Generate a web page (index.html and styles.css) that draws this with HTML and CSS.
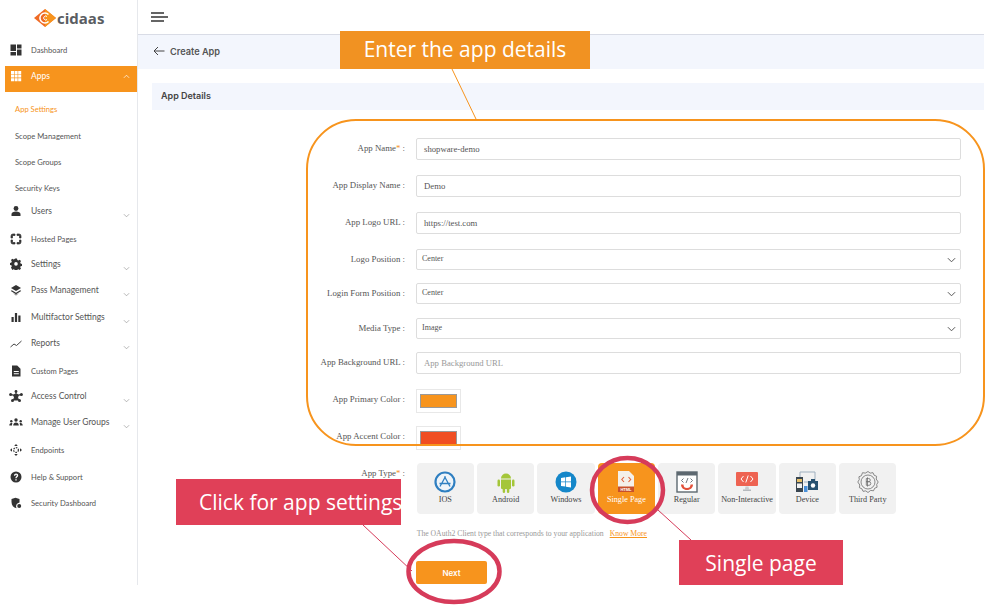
FILE: index.html
```html
<!DOCTYPE html>
<html>
<head>
    <title>Create App</title>
    <meta charset="utf-8" />
    <link rel="stylesheet" href="styles.css">
</head>
<body>
    <div class="page">
        <aside class="sidebar">
            <div class="logo">
                <svg class="logo-mark" viewBox="0 0 22 18" width="22" height="18">
                    <path d="M11 0 L22 9 L11 18 L0 9 Z" fill="#ef6a24"/>
                    <path d="M11 0 L22 9 L11 18 Z" fill="#f7941d"/>
                    <path d="M14.5 5.5 A5 5 0 1 0 14.5 12.500" fill="none" stroke="#fff" stroke-width="1.6"/>
                    <path d="M13 7.500 A2 2 0 1 0 13 10.500" fill="none" stroke="#fff" stroke-width="1"/>
                </svg>
                <span class="logo-text">cidaas</span>
            </div>
            <nav class="menu">
                <a class="item small">
                    <svg class="ico" viewBox="0 0 12 12"><path d="M.5.500h5.500v6.500H.5zM7 .5h4.500v4H7zM7 5.500h4.500v6H7zM.5 8H6v3.500H.5z"/></svg>
                    Dashboard
                </a>
                <a class="item active">
                    <svg class="ico" viewBox="0 0 12 12"><path d="M1 1h3v3H1zM4.600 1h3v3h-3zM8.200 1h3v3h-3zM1 4.600h3v3H1zM4.600 4.600h3v3h-3zM8.200 4.600h3v3h-3zM1 8.200h3v3H1zM4.600 8.200h3v3h-3zM8.200 8.200h3v3h-3z"/></svg>
                    Apps
                    <svg class="chev" viewBox="0 0 8 5"><path d="M1 4l3-3 3 3"/></svg>
                </a>
                <div class="subs">
                    <a class="sub current">App Settings</a>
                    <a class="sub">Scope Management</a>
                    <a class="sub">Scope Groups</a>
                    <a class="sub">Security Keys</a>
                </div>
                <a class="item">
                    <svg class="ico" viewBox="0 0 12 12"><circle cx="6" cy="3.500" r="2.400"/><path d="M1.500 11V9c0-1.600 2-2.600 4.500-2.600s4.500 1 4.500 2.600v2z"/></svg>
                    Users
                    <svg class="chev" viewBox="0 0 8 5"><path d="M1 1l3 3 3-3"/></svg>
                </a>
                <a class="item small">
                    <svg class="ico" viewBox="0 0 12 12"><path stroke="#333" stroke-width=".7" d="M1 3a2 2 0 0 1 2-2h2v1.500H3a.5.500 0 0 0-.5.500v2H1zM7 1h2a2 2 0 0 1 2 2v2H9.500V3a.5.500 0 0 0-.5-.5H7zM1 7h1.500v2a.5.500 0 0 0 .5.500h2V11H3a2 2 0 0 1-2-2zM9.500 7H11v2a2 2 0 0 1-2 2H7V9.500h2a.5.500 0 0 0 .5-.5z"/></svg>
                    Hosted Pages
                </a>
                <a class="item">
                    <svg class="ico" viewBox="0 0 12 12"><path fill-rule="evenodd" d="M5 .5h2l.3 1.500 1.100.5 1.300-.8 1.300 1.400-.8 1.300.4 1.100 1.400.4v2l-1.400.3-.4 1.100.8 1.300-1.300 1.400-1.300-.8-1.100.5-.3 1.300H5l-.3-1.300-1.100-.5-1.300.8L1 9.600l.8-1.300-.4-1.100L0 6.900v-2l1.400-.4.4-1.100L1 2.100 2.300.7l1.300.8 1.100-.5zM6 4.100a1.800 1.800 0 1 0 0 3.600 1.800 1.800 0 0 0 0-3.600z"/></svg>
                    Settings
                    <svg class="chev" viewBox="0 0 8 5"><path d="M1 1l3 3 3-3"/></svg>
                </a>
                <a class="item">
                    <svg class="ico" viewBox="0 0 12 12"><path d="M6 1l5 3-5 3-5-3z"/><path d="M1.800 6.200L6 8.700l4.200-2.500 1 .7L6 10.200.8 6.900z"/><path d="M3 9l3 1.800L9 9l-3 2.400z"/></svg>
                    Pass Management
                    <svg class="chev" viewBox="0 0 8 5"><path d="M1 1l3 3 3-3"/></svg>
                </a>
                <a class="item">
                    <svg class="ico" viewBox="0 0 12 12"><path d="M1.500 6h2.200v5H1.500zM4.900 2h2.200v9H4.900zM8.300 4.500h2.200V11H8.300z"/></svg>
                    Multifactor Settings
                    <svg class="chev" viewBox="0 0 8 5"><path d="M1 1l3 3 3-3"/></svg>
                </a>
                <a class="item">
                    <svg class="ico line" viewBox="0 0 12 12"><path d="M.5 10L4 7l2.500 1.500L11.500 4"/></svg>
                    Reports
                    <svg class="chev" viewBox="0 0 8 5"><path d="M1 1l3 3 3-3"/></svg>
                </a>
                <a class="item small">
                    <svg class="ico" viewBox="0 0 12 12"><path fill-rule="evenodd" d="M2 .5h5.200L10.500 3.800V11.500H2zM3.800 6v1h5V6zM3.800 8.200v1h5v-1z"/></svg>
                    Custom Pages
                </a>
                <a class="item">
                    <svg class="ico wide" viewBox="0 0 14 12"><path d="M1.500 4.500L7 6l5.500-1.500M7 1.500V6M3.500 10.500L7 6l3.500 4.500" stroke="#333" stroke-width="1"/><circle cx="7" cy="6" r="2.500"/><circle cx="1.600" cy="4.500" r="1.500"/><circle cx="12.400" cy="4.500" r="1.500"/><circle cx="7" cy="1.500" r="1.400"/><circle cx="3.500" cy="10.400" r="1.500"/><circle cx="10.500" cy="10.400" r="1.500"/></svg>
                    Access Control
                    <svg class="chev" viewBox="0 0 8 5"><path d="M1 1l3 3 3-3"/></svg>
                </a>
                <a class="item">
                    <svg class="ico wide" viewBox="0 0 14 12"><circle cx="7" cy="4" r="1.700"/><path d="M4.200 9.500c0-2 1.200-3 2.800-3s2.800 1 2.800 3z"/><circle cx="2.300" cy="5.200" r="1.200"/><path d="M.3 9.500c0-1.600.8-2.500 2-2.500.5 0 .8.100 1.100.3-.3.600-.4 1.300-.4 2.200z"/><circle cx="11.700" cy="5.200" r="1.200"/><path d="M13.700 9.500c0-1.600-.8-2.500-2-2.500-.5 0-.8.100-1.100.3.300.6.400 1.300.4 2.200z"/></svg>
                    Manage User Groups
                    <svg class="chev" viewBox="0 0 8 5"><path d="M1 1l3 3 3-3"/></svg>
                </a>
                <a class="item small">
                    <svg class="ico" viewBox="0 0 12 12"><path d="M6 0l1.800 2H4.200zM6 12l1.800-2H4.200zM0 6l2-1.800v3.600zM12 6l-2-1.800v3.600z"/><circle cx="6" cy="6" r="2.400" fill="none" stroke="#333" stroke-width="1.200" stroke-dasharray="1.500 1"/></svg>
                    Endpoints
                </a>
                <a class="item small">
                    <svg class="ico" viewBox="0 0 12 12"><path fill-rule="evenodd" d="M6 .5a5.500 5.500 0 1 1 0 11 5.500 5.500 0 0 1 0-11zM5.300 8.200v1.400h1.400V8.200zM4 4.700h1.300c0-.6.300-.9.800-.9s.7.300.7.700c0 .9-1.500 1-1.500 2.800h1.300c0-1.200 1.600-1.400 1.600-2.900 0-1.200-.9-1.900-2.100-1.900C4.900 2.500 4 3.400 4 4.700z"/></svg>
                    Help &amp; Support
                </a>
                <a class="item small">
                    <svg class="ico" viewBox="0 0 12 12"><path d="M5.500.8L9.500 2v3.500a4 4 0 0 0-3 5.800C3.500 10.500 1.500 8.500 1.500 5V2z"/><circle cx="9.200" cy="9" r="2"/></svg>
                    Security Dashboard
                </a>
            </nav>
        </aside>

        <main class="content">
            <header class="topbar">
                <svg class="burger" viewBox="0 0 17 10" width="17" height="10"><path d="M0 1h13M0 5h17M0 9h13"/></svg>
            </header>
            <div class="titlebar">
                <svg class="back" viewBox="0 0 12 10" width="12" height="10"><path d="M11.500 5H1M5 1L1 5l4 4"/></svg>
                <span>Create App</span>
            </div>
            <h2 class="section">App Details</h2>

            <form class="form">
                <div class="row">
                    <label>App Name<i>*</i> :</label>
                    <div class="field">shopware-demo</div>
                </div>
                <div class="row">
                    <label>App Display Name :</label>
                    <div class="field">Demo</div>
                </div>
                <div class="row">
                    <label>App Logo URL :</label>
                    <div class="field">https://test.com</div>
                </div>
                <div class="row row-select">
                    <label>Logo Position :</label>
                    <div class="field select">Center
                        <svg viewBox="0 0 10 6"><path d="M1 1l4 4 4-4"/></svg>
                    </div>
                </div>
                <div class="row row-select">
                    <label>Login Form Position :</label>
                    <div class="field select">Center
                        <svg viewBox="0 0 10 6"><path d="M1 1l4 4 4-4"/></svg>
                    </div>
                </div>
                <div class="row row-select">
                    <label>Media Type :</label>
                    <div class="field select">Image
                        <svg viewBox="0 0 10 6"><path d="M1 1l4 4 4-4"/></svg>
                    </div>
                </div>
                <div class="row">
                    <label>App Background URL :</label>
                    <div class="field placeholder">App Background URL</div>
                </div>
                <div class="row">
                    <label>App Primary Color :</label>
                    <div class="swatch"><span class="primary"></span></div>
                </div>
                <div class="row">
                    <label>App Accent Color :</label>
                    <div class="swatch"><span class="accent"></span></div>
                </div>
                <div class="row row-types">
                    <label>App Type<i>*</i> :</label>
                    <div class="types">
                        <div class="type">
                            <svg viewBox="0 0 22 22"><circle cx="11" cy="11" r="9.500" fill="#eef4f9" stroke="#2f7fc1" stroke-width="2.200"/><path d="M6 15.500L11.500 5.500M16 15.500L10.500 5.500M5.500 12.500h11" fill="none" stroke="#2f7fc1" stroke-width="1.300"/></svg>
                            IOS
                        </div>
                        <div class="type">
                            <svg viewBox="0 0 22 22" fill="#a4c639"><path d="M6 7.500a5 5 0 0 1 10 0z"/><path d="M6 8.500h10v8.500a1 1 0 0 1-1 1H7a1 1 0 0 1-1-1z"/><rect x="2.500" y="8.500" width="2.500" height="7" rx="1.200"/><rect x="17" y="8.500" width="2.500" height="7" rx="1.200"/><rect x="7.700" y="17" width="2.400" height="5" rx="1.200"/><rect x="11.900" y="17" width="2.400" height="5" rx="1.200"/></svg>
                            Android
                        </div>
                        <div class="type">
                            <svg viewBox="0 0 22 22"><circle cx="11" cy="11" r="10.500" fill="#1587c9"/><path d="M6 7l4.300-.7v4.200H6zM11 6.200l5-.8v5.100h-5zM6 11.300h4.300v4.300L6 15zM11 11.300h5v5.300l-5-.8z" fill="#fff"/></svg>
                            Windows
                        </div>
                        <div class="type selected">
                            <svg viewBox="0 0 22 22"><path d="M3 0h11l5 5v16H3z" fill="#f4f0ea"/><path d="M9 6L6.800 8.500 9 11M13.500 6l2.200 2.500-2.200 2.500" fill="none" stroke="#e2603a" stroke-width="1.100"/><rect x="3" y="15.500" width="16" height="5.500" fill="#c8502c"/><text x="11" y="19.700" class="html-tag">HTML</text></svg>
                            Single Page
                        </div>
                        <div class="type">
                            <svg viewBox="0 0 22 22"><rect x="1" y="1" width="20" height="20" fill="#fff" stroke="#5d6870" stroke-width="1.400"/><rect x="1" y="1" width="20" height="3.500" fill="#5d6870"/><path d="M7.500 7.500L5.500 9.500l2 2M14.500 7.500l2 2-2 2M12 7l-2 5" fill="none" stroke="#5d6870" stroke-width=".9"/><path d="M5 13.500h2.500a3.500 3.500 0 0 0 7 0H17c0 3-2.500 5.500-6 5.500s-6-2.500-6-5.500z" fill="#e2503a"/></svg>
                            Regular
                        </div>
                        <div class="type">
                            <svg viewBox="0 0 22 22"><rect x="0" y="1" width="22" height="14" rx="1" fill="#ee6352"/><path d="M7.500 5L5 8l2.500 3M14.500 5L17 8l-2.500 3M12.200 4.500l-2.400 7" fill="none" stroke="#fff" stroke-width="1"/><path d="M9.500 15.500h3l.5 3H9z" fill="#c9cccf"/><rect x="7" y="18.500" width="8" height="1.500" fill="#b5b9bd"/></svg>
                            Non-Interactive
                        </div>
                        <div class="type">
                            <svg viewBox="0 0 22 22"><path d="M4 6V1h15v9M8 11h5" fill="none" stroke="#9fb0bf" stroke-width="1"/><rect x="0" y="6" width="7" height="15" fill="#3a4650"/><rect x="1" y="8" width="5" height="3" fill="#e7c16a"/><rect x="1" y="12.500" width="5" height="4.500" fill="#f2f2f2"/><rect x="12" y="10" width="10" height="9" fill="#27506f"/><rect x="15" y="8" width="4" height="2" fill="#27506f"/><circle cx="17" cy="14.500" r="2.200" fill="#fff"/><rect x="8" y="15" width="3.500" height="6" fill="#4a90d9"/></svg>
                            Device
                        </div>
                        <div class="type">
                            <svg viewBox="0 0 22 22" fill="none" stroke="#6d6d6d" stroke-width=".8"><path d="M11 .5l2.200 1.600 2.800-.4 1.100 2.500 2.500 1.100-.4 2.700L21.200 11l-1.500 2.500.4 2.700-2.500 1.100-1.100 2.500-2.800-.4L11 21.500l-2.200-1.600-2.800.4-1.100-2.500-2.500-1.100.4-2.700L.8 11l1.500-2.500-.4-2.700 2.500-1.100L5.500 1.700l2.800.4z"/><circle cx="11" cy="11" r="7"/><path d="M9.300 7.500h2.400a1.500 1.500 0 0 1 0 3.200H9.300h2.700a1.700 1.700 0 0 1 0 3.600H9.300zM10.500 6.300v9.300"/></svg>
                            Third Party
                        </div>
                    </div>
                </div>
                <p class="hint">The OAuth2 Client type that corresponds to your application <a>Know More</a></p>
                <button class="next" type="button">Next</button>
            </form>
        </main>
    </div>

    <!-- tutorial annotations drawn over the screenshot -->
    <div class="frame"></div>
    <svg class="marks" viewBox="0 0 1003 610" width="1003" height="610">
        <path class="line-orange" d="M452 69L476 119"/>
        <path class="line-red" d="M363 525L412 571M658 510L691 540"/>
        <ellipse class="ring" cx="627.5" cy="490" rx="35.5" ry="32"/>
        <ellipse class="ring" cx="454" cy="571.5" rx="45.5" ry="30.5"/>
    </svg>
    <div class="note note-orange">Enter the app details</div>
    <div class="note note-settings">Click for app settings</div>
    <div class="note note-single">Single page</div>
</body>
</html>
```

FILE: styles.css
```css
body { margin:0; background:#fff; font-family:"Liberation Serif", serif; color:#444; }
.page { display:flex; width:1003px; height:610px; overflow:hidden; }

.sidebar { width:137px; height:585px; flex:none; border-right:1px solid #e6e8ec; font-family:Lato, sans-serif; }
.logo { display:flex; align-items:center; height:35px; padding-left:34px; gap:1px; box-sizing:border-box; }
.logo-mark { flex:none; }
.logo-text { font:bold 15px "Open Sans", sans-serif; color:#5a5d62; }

.menu { display:flex; flex-direction:column; padding-top:2px; }
.item { display:flex; align-items:center; height:26.4px; padding:0 6px 3px 9px; box-sizing:border-box; font-size:8.5px; color:#555; }
.item.small { font-size:7.6px; padding-bottom:0; }
.ico { width:14px; height:12px; margin-right:8px; fill:#333; flex:none; }
.ico.line { fill:none; stroke:#444; stroke-width:1; }
.chev { width:7px; height:5px; margin-left:auto; margin-top:9px; margin-right:1px; fill:none; stroke:#999; stroke-width:.8; }
.item.active { margin:2.3px 0 0 5px; padding-left:4px; background:#f7941d; color:#fff; height:26px; padding-bottom:6px; }
.item.active .ico { fill:#fff; }
.item.active .chev { stroke:#fff; margin-top:2px; }
.subs { margin:4.5px 0 -2px; }
.sub { height:26.33px; display:flex; align-items:center; padding-left:15px; font-size:7.6px; color:#555; }
.sub.current { color:#f7941d; }

.content { flex:1; padding-right:19px; min-width:0; }
.topbar { height:34px; border-bottom:1px solid #d9dce6; display:flex; align-items:center; padding-left:13px; }
.burger { fill:none; stroke:#333; stroke-width:1.4; }
.titlebar { height:34px; padding-bottom:2px; box-sizing:border-box; background:#f3f6fd; display:flex; align-items:center; padding-left:15px; gap:5px; font:600 9.2px Inter, sans-serif; color:#555; }
.back { fill:none; stroke:#444; stroke-width:1; }
.section { margin:14px 0 28px 14px; height:27px; padding-left:9px; background:#f3f6fd; font:600 9px/26px Inter, sans-serif; color:#444; }

.row { display:flex; height:37px; }
.row-select { height:34.3px; }
.row-types { height:auto; }
.row label { width:253px; margin-left:14px; flex:none; text-align:right; font-size:8.8px; line-height:21px; color:#555; }
.row label i { color:#f7941d; font-style:normal; }
.field { margin-left:11px; width:545px; height:22px; box-sizing:border-box; border:1px solid #ddd; border-radius:2px; padding:0 7px; font-size:8.7px; line-height:21px; color:#555; }
.placeholder { color:#999; }
.select { height:21px; line-height:17px; padding:0 5px; position:relative; font-size:8px; }
.select svg { position:absolute; right:4px; top:7px; width:9px; height:6px; fill:none; stroke:#555; stroke-width:1.1; }
.swatch { margin-left:11px; width:45px; height:24px; box-sizing:border-box; border:1px solid #e8e8e8; padding:4px 3px; }
.swatch span { display:block; height:14px; box-sizing:border-box; border:1px solid #999; }
.primary { background:#f7941d; }
.accent { background:#f04e23; }

.types { display:flex; gap:3.05px; margin-left:11.7px; }
.type { width:57.3px; height:51px; box-sizing:border-box; padding-top:8px; border-radius:4px; background:#f1f1f1; text-align:center; font-size:8.2px; color:#444; display:flex; flex-direction:column; align-items:center; gap:2px; }
.type svg { width:22px; height:22px; }
.type.selected { background:#f7941d; color:#fff; }
.html-tag { font:bold 4px "Liberation Sans", sans-serif; fill:#fff; text-anchor:middle; }

.hint { margin:15px 0 0 278.7px; font-size:7.7px; line-height:10px; color:#999; }
.hint a { margin-left:4px; color:#f7941d; text-decoration:underline; }
.next { display:block; margin:22px 0 0 278px; width:71px; height:23.5px; border:0; border-radius:2px; background:#f7941d; color:#fff; font:600 8px Inter, sans-serif; }

.frame { position:absolute; left:306px; top:119px; width:679px; height:327px; box-sizing:border-box; border:2.5px solid #f7941d; border-radius:50px; }
.marks { position:absolute; left:0; top:0; fill:none; }
.line-orange { stroke:#f7941d; stroke-width:1; }
.line-red { stroke:#d63b5a; stroke-width:1; }
.ring { stroke:#d63b5a; stroke-width:4.5; }
.note { position:absolute; box-sizing:border-box; color:#fff; display:flex; align-items:center; justify-content:center; white-space:nowrap; font:21px "Open Sans", sans-serif; }
.note-orange { left:340px; top:31px; width:250px; height:38px; padding-bottom:2px; background:#f19222; }
.note-settings { left:176px; top:479px; width:225px; height:46px; padding-left:23px; justify-content:flex-start; background:#e04058; }
.note-single { left:679px; top:540px; width:164px; height:45px; background:#e04058; }
```
